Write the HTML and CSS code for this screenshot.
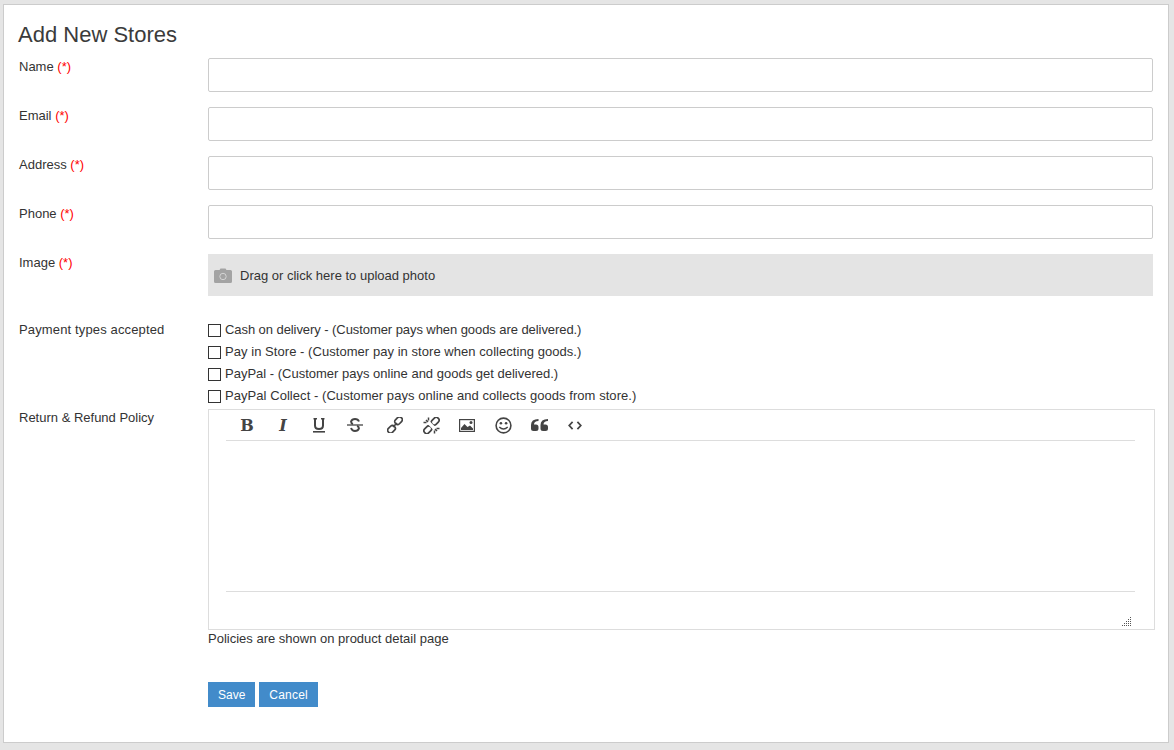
FILE: index.html
```html
<!DOCTYPE html>
<html lang="en">
<head>
<meta charset="utf-8">
<title>Add New Stores</title>
<link rel="stylesheet" href="styles.css">
</head>
<body>
<main class="card">
  <h1 class="title">Add New Stores</h1>
  <form class="form">
    <div class="row">
      <label class="label">Name <span class="req">(*)</span></label>
      <input class="input" type="text">
    </div>
    <div class="row">
      <label class="label">Email <span class="req">(*)</span></label>
      <input class="input" type="text">
    </div>
    <div class="row">
      <label class="label">Address <span class="req">(*)</span></label>
      <input class="input" type="text">
    </div>
    <div class="row">
      <label class="label">Phone <span class="req">(*)</span></label>
      <input class="input" type="text">
    </div>
    <div class="row row-image">
      <label class="label">Image <span class="req">(*)</span></label>
      <div class="upload">
        <svg class="cam" width="18" height="15" viewBox="0 0 18 15"><path fill="#a3a3a3" d="M1.5 2H5.5L6.5 0.5H11.5L12.5 2H16.5Q18 2 18 3.5V13.5Q18 15 16.5 15H1.5Q0 15 0 13.5V3.5Q0 2 1.5 2Z"/><circle cx="9" cy="8.5" r="3.2" fill="none" stroke="#d4d4d4" stroke-width="1"/></svg>
        <span>Drag or click here to upload photo</span>
      </div>
    </div>
    <div class="row row-pay">
      <label class="label label-pay">Payment types accepted</label>
      <div class="checks">
        <label class="check"><span class="box"></span><span class="check-text">Cash on delivery - (Customer pays when goods are delivered.)</span></label>
        <label class="check"><span class="box"></span><span class="check-text">Pay in Store - (Customer pay in store when collecting goods.)</span></label>
        <label class="check"><span class="box"></span><span class="check-text">PayPal - (Customer pays online and goods get delivered.)</span></label>
        <label class="check"><span class="box"></span><span class="check-text">PayPal Collect - (Customer pays online and collects goods from store.)</span></label>
      </div>
    </div>
    <div class="row row-policy">
      <label class="label">Return &amp; Refund Policy</label>
      <div class="policy">
        <div class="editor">
          <div class="toolbar">
            <span class="tool tool-text tool-b">B</span>
            <span class="tool tool-text tool-i">I</span>
            <span class="tool">
              <svg width="14" height="16" viewBox="0 0 14 16"><path fill="none" stroke="#444" stroke-width="2" d="M3 2V8.5Q3 12 7 12T11 8.5V2"/><path fill="none" stroke="#444" stroke-width="1.6" d="M1.5 1.8H5M9 1.8H12.5"/><path stroke="#444" stroke-width="1.6" d="M1 14.8H13"/></svg>
            </span>
            <span class="tool tool-strike">
              <svg width="16" height="16" viewBox="0 0 16 16"><path fill="none" stroke="#444" stroke-width="1.9" d="M12 4.5Q11 2 8 2T4 4.6Q4 6.4 6 7M4 11Q5 14 8 14T12 11.4Q12 9.6 10 9"/><path stroke="#444" stroke-width="1.3" d="M0 8H16"/></svg>
            </span>
            <span class="tool">
              <svg width="16" height="16" viewBox="0 0 16 16"><g fill="none" stroke="#444" stroke-width="1.7"><rect x="7.4" y="0.9" width="8.2" height="5.6" rx="2.6" transform="rotate(-45 11.5 3.7)"/><rect x="0.4" y="9.5" width="8.2" height="5.6" rx="2.6" transform="rotate(-45 4.5 12.3)"/><path d="M6 10L10 6"/></g></svg>
            </span>
            <span class="tool">
              <svg width="17" height="17" viewBox="0 0 17 17"><g fill="none" stroke="#444" stroke-width="1.7"><rect x="8" y="1.4" width="8.4" height="5.6" rx="2.6" transform="rotate(-45 12.2 4.2)"/><rect x="0.6" y="10" width="8.4" height="5.6" rx="2.6" transform="rotate(-45 4.8 12.8)"/></g><path fill="none" stroke="#fff" stroke-width="3.4" d="M4.5 4.5L12.5 12.5"/><path fill="none" stroke="#444" stroke-width="1.5" d="M5.5 0.5V3.5M0.5 5.5H3.5M11.5 16.5V13.5M16.5 11.5H13.5M3 3L5 5M14 14L12 12"/></svg>
            </span>
            <span class="tool">
              <svg width="16" height="13" viewBox="0 0 16 13"><rect x="0.6" y="0.6" width="14.8" height="11.8" fill="none" stroke="#444" stroke-width="1.2"/><path fill="#444" d="M2 11V9L5.5 5L8.5 8L11 6.5L14 9.5V11Z"/><circle cx="12" cy="3.6" r="1.5" fill="#444"/></svg>
            </span>
            <span class="tool">
              <svg width="17" height="17" viewBox="0 0 17 17"><circle cx="8.5" cy="8.5" r="7.4" fill="none" stroke="#444" stroke-width="1.6"/><circle cx="5.9" cy="6.3" r="1.3" fill="#444"/><circle cx="11.1" cy="6.3" r="1.3" fill="#444"/><path fill="none" stroke="#444" stroke-width="1.4" d="M4.3 10Q8.5 14 12.7 10"/></svg>
            </span>
            <span class="tool">
              <svg width="17" height="12" viewBox="0 0 17 12"><path fill="#444" d="M7.5 0V2Q3 2 3 5.5H5Q7.5 5.5 7.5 8V9.5Q7.5 12 5 12H2.5Q0 12 0 9.5V6Q0 0 7.5 0ZM17 0V2Q12.5 2 12.5 5.5H14.5Q17 5.5 17 8V9.5Q17 12 14.5 12H12Q9.5 12 9.5 9.5V6Q9.5 0 17 0Z"/></svg>
            </span>
            <span class="tool">
              <svg width="14" height="9" viewBox="0 0 14 9"><path fill="none" stroke="#444" stroke-width="1.7" d="M4.6 0.8L1.2 4.5L4.6 8.2M9.4 0.8L12.8 4.5L9.4 8.2"/></svg>
            </span>
          </div>
          <div class="body"></div>
          <svg class="grip" width="10" height="9" viewBox="0 0 10 9"><path stroke="#555" stroke-width="1" stroke-dasharray="1 1" d="M8 0.5H10M6 2.5H10M4 4.5H10M2 6.5H10M0 8.5H10"/></svg>
        </div>
        <p class="hint">Policies are shown on product detail page</p>
      </div>
    </div>
    <div class="actions">
      <button type="button" class="btn btn-save">Save</button>
      <button type="button" class="btn btn-cancel">Cancel</button>
    </div>
  </form>
</main>
</body>
</html>
```
FILE: styles.css
```css
* { box-sizing: border-box; }
html, body { margin: 0; height: 100%; }
body {
  background: #e5e5e5;
  padding: 4px 5px 7px 3px;
  font-family: "Liberation Sans", Arial, sans-serif;
  font-size: 13px;
  color: #333;
}
.card {
  height: 739px;
  background: #fff;
  border: 1px solid #ccc;
  padding: 16px 12px 0 15px;
}
.title {
  margin: 0 0 10px -1px;
  font-size: 22px;
  font-weight: 400;
  line-height: 27px;
  color: #3b3b3b;
}
.row { display: flex; }
.label { width: 189px; flex: none; line-height: 16px; padding-top: 1px; }
.label-pay { letter-spacing: 0.14px; }
.req { color: #f00; }
.input {
  width: 945px;
  height: 34px;
  border: 1px solid #ccc;
  border-radius: 2px;
  background: #fff;
  margin-bottom: 15px;
  display: block;
  padding: 0 10px;
}
.row-image { height: 75px; }
.upload {
  width: 945px;
  height: 42px;
  background: #e4e4e4;
  display: flex;
  align-items: center;
  padding-left: 6px;
  gap: 8px;
}
.row-pay .label { margin-top: -8px; }
.checks { display: flex; flex-direction: column; margin-top: -10px; }
.check { display: flex; align-items: center; height: 22px; }
.check-text { margin-top: -2px; }
.check:nth-child(1) .check-text { letter-spacing: -0.07px; }
.check:nth-child(2) .check-text { letter-spacing: 0.05px; }
.check:nth-child(4) .check-text { letter-spacing: 0.055px; }
.box {
  width: 13px;
  height: 13px;
  border: 1px solid #333;
  margin-right: 4px;
  flex: none;
}
.row-policy { margin-top: 2px; }
.policy { width: 947px; }
.editor {
  position: relative;
  height: 221px;
  border: 1px solid #ddd;
  padding: 0 19px 0 17px;
}
.toolbar {
  height: 31px;
  border-bottom: 1px solid #ddd;
  display: flex;
  align-items: center;
  padding-left: 3px;
}
.tool {
  width: 36px;
  height: 30px;
  display: flex;
  align-items: center;
  justify-content: center;
  flex: none;
}
.tool-strike { margin-right: 4px; }
.tool-text { font-weight: 700; color: #444; }
.tool-b { font-family: "DejaVu Serif", serif; font-size: 16px; }
.tool-i { font-family: "DejaVu Serif", serif; font-style: italic; font-size: 16px; }
.body { height: 151px; border-bottom: 1px solid #ddd; }
.grip { position: absolute; right: 22px; bottom: 3px; }
.hint { margin: 0; padding-top: 1px; line-height: 16px; }
.actions { display: flex; gap: 4px; padding-left: 189px; margin-top: 35px; }
.btn {
  height: 25px;
  border: 0;
  background: #428bca;
  color: #fff;
  font: inherit;
  font-size: 12px;
  padding: 0 10px;
}
.btn-cancel { letter-spacing: 0.2px; }
```
